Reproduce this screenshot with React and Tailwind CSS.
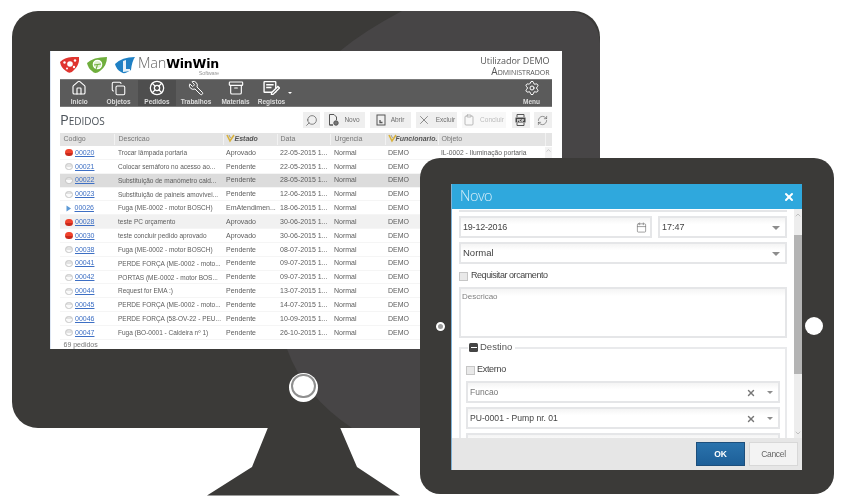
import React from "react";
import { House, Copy, LifeBuoy, Wrench, Archive, Settings, Search, X, Clipboard, RefreshCw, Calendar, ChevronUp, ChevronDown } from "lucide-react";

const rows = [
  ["r", "00020", "Trocar lâmpada portaria", "Aprovado", "22-05-2015 1...", "IL-0002 - Iluminação portaria", ""],
  ["g", "00021", "Colocar semáforo no acesso ao...", "Pendente", "22-05-2015 1...", "", ""],
  ["g", "00022", "Substituição de manómetro cald...", "Pendente", "28-05-2015 1...", "", "bg-[#dcdcdc]"],
  ["g", "00023", "Substituição de paineis amovívei...", "Pendente", "12-06-2015 1...", "", ""],
  ["b", "00026", "Fuga (ME-0002 - motor BOSCH)", "EmAtendimen...", "18-06-2015 1...", "", ""],
  ["r", "00028", "teste PC orçamento", "Aprovado", "30-06-2015 1...", "", "bg-[#f1f1f1]"],
  ["r", "00030", "teste concluir pedido aprovado", "Aprovado", "30-06-2015 1...", "", ""],
  ["g", "00038", "Fuga (ME-0002 - motor BOSCH)", "Pendente", "08-07-2015 1...", "", ""],
  ["g", "00041", "PERDE FORÇA (ME-0002 - moto...", "Pendente", "09-07-2015 1...", "", ""],
  ["g", "00042", "PORTAS (ME-0002 - motor BOS...", "Pendente", "09-07-2015 1...", "", ""],
  ["g", "00044", "Request for EMA :)", "Pendente", "13-07-2015 1...", "", ""],
  ["g", "00045", "PERDE FORÇA (ME-0002 - moto...", "Pendente", "14-07-2015 1...", "", ""],
  ["g", "00046", "PERDE FORÇA (58-OV-22 - PEU...", "Pendente", "10-09-2015 1...", "", ""],
  ["g", "00047", "Fuga (BO-0001 - Caldeira nº 1)", "Pendente", "26-10-2015 1...", "", ""],
];

const cols = "grid grid-cols-[54px_109px_54px_53px_55px_53px_107px_7px]";

function Gold() {
  return (
    <svg width="9" height="9" viewBox="0 0 9 9" className="absolute left-[2px] top-0">
      <path d="M1 1 L4 7 L8 1" fill="none" stroke="#d9b23c" strokeWidth="1.6" />
      <path d="M3 1 L4.5 4" stroke="#8a8a8a" strokeWidth="0.8" />
    </svg>
  );
}

function Status({ kind }) {
  if (kind === "b")
    return (
      <svg width="7" height="7" viewBox="0 0 7 7" className="ml-[5.5px] mr-[2.5px] shrink-0">
        <path d="M1.5 0.5 L6 3.5 L1.5 6.5 Z" fill="#5d9ad6" />
      </svg>
    );
  if (kind === "r")
    return <span className="ml-[5px] mr-[2.5px] h-[7px] w-[8px] shrink-0 rounded-full bg-[linear-gradient(#f0432d_55%,#c92a1c_55%)]" />;
  return <span className="ml-[5px] mr-[2.5px] h-[7px] w-[8px] shrink-0 rounded-full border border-[#c6c6c6] bg-[linear-gradient(#e2e2e2_50%,#fafafa_50%)]" />;
}

function NavItem({ icon, label, w, active }) {
  return (
    <div className={`flex h-full flex-col items-center justify-end ${w} ${active ? "bg-[#4e4e4e]" : ""}`}>
      {icon}
      <span className="mt-[1px] text-[6.5px] font-bold leading-[9px] text-[#dedede]">{label}</span>
    </div>
  );
}

function ToolBtn({ w, icon, label, faint }) {
  return (
    <div className={`flex h-[16px] items-center justify-center gap-[5px] ${w} ${faint ? "bg-[#f8f8f8] text-[#bdbdbd]" : "bg-[#efefef] text-[#6e6e6e]"} text-[6.5px]`}>
      {icon}
      {label && <span>{label}</span>}
    </div>
  );
}

function Logos() {
  return (
    <div className="flex items-center gap-[8px]">
      <svg width="19" height="17" viewBox="0 0 19 17">
        <path d="M0 5 Q6 -1 19 0 Q20 7 14 13 Q10 18 6 14 Q1 11 0 5Z" fill="#e0352f" />
        <circle cx="10" cy="7" r="2.8" fill="#fff" />
        <circle cx="4.5" cy="5.5" r="1.2" fill="#fff" /><circle cx="15" cy="3.5" r="1.2" fill="#fff" /><circle cx="14" cy="10" r="1.2" fill="#fff" /><circle cx="7" cy="11.5" r="1" fill="#fff" />
      </svg>
      <svg width="20" height="17" viewBox="0 0 20 17">
        <path d="M0 6 Q6 0 20 0 Q20 9 13 14 Q8 18 5 14 Q1 11 0 6Z" fill="#6fae3c" />
        <circle cx="10.5" cy="7.5" r="4.2" fill="#dff0d0" stroke="#fff" strokeWidth="1.2" />
        <path d="M7 8 L14 7 M10.5 8 L9 12" stroke="#6fae3c" strokeWidth="1.1" />
      </svg>
      <svg width="20" height="17" viewBox="0 0 20 17">
        <path d="M0 7 Q7 0 20 0 Q17 4 16 13 Q9 18 6 15 Q1 12 0 7Z" fill="#1f80c4" />
        <path d="M8 4 L11 3 L11 12 L15 12 L15 14 L8 15Z" fill="#e5f1f9" />
      </svg>
    </div>
  );
}

function Field({ children, cls = "" }) {
  return (
    <div className={`flex h-[22px] items-center border-2 border-[#e5e6e8] bg-[linear-gradient(#f4f4f4,#fff_35%)] pl-[1px] pr-[5px] pt-[1px] text-[9px] text-[#444] ${cls}`}>
      {children}
    </div>
  );
}

const Caret = () => <span className="ml-auto h-0 w-0 border-x-[4px] border-t-[4px] border-x-transparent border-t-[#8d8d8d]" />;
const SmallCaret = () => <span className="h-0 w-0 border-x-[3.5px] border-t-[3.5px] border-x-transparent border-t-[#8d8d8d]" />;
const Clear = () => <X size={10} strokeWidth={3.4} className="ml-auto mr-[11.5px] text-[#777]" />;

export default function App() {
  return (
    <div className="relative h-[499px] w-[842px] overflow-hidden bg-white font-['Liberation_Sans',sans-serif]">
      {/* stand */}
      <svg width="842" height="499" className="absolute left-0 top-0">
        <path d="M269 425 L252 467 L207 495.5 L400 495.5 L357 467 L339 425 Z" fill="#3b3a38" />
      </svg>

      {/* monitor */}
      <div className="absolute left-[12px] top-[11px] h-[417px] w-[588px] overflow-hidden rounded-[26px] bg-[#3b3a38] pl-[37.5px] pt-[40px]">
        <svg width="588" height="417" className="absolute left-0 top-0">
          <path d="M390 0 Q352 20 328 40 L275 338 Q292 385 340 417 L588 417 L588 32 Q586 4 558 0 Z" fill="#474546" />
        </svg>
        <div className="relative flex h-[298px] w-[512px] flex-col border-l border-[#dfe8f5] bg-white blur-[0.25px]">
          {/* header */}
          <div className="flex h-[28px] shrink-0 items-center pl-[9.5px] pr-[12px]">
            <Logos />
            <div className="relative ml-[3px] -mt-[3px] text-[14.5px] leading-[16px] tracking-[-0.2px] text-black">
              <span className="font-['Open_Sans'] font-light text-[#666]">Man</span>
              <span className="font-['DejaVu_Sans'] text-[12.5px] font-bold">WinWin</span>
              <span className="absolute right-0 top-[16px] text-[5.5px] leading-[5px] text-[#999]">Software</span>
            </div>
            <div className="ml-auto flex flex-col items-end pt-[1px] text-[#555]">
              <span className="font-['Open_Sans'] text-[9px] leading-[10px]">Utilizador DEMO</span>
              <span className="font-['Open_Sans'] text-[10px] leading-[10px] [font-variant:small-caps]">Administrador</span>
            </div>
          </div>

          {/* nav */}
          <div className="ml-[9px] mr-[10px] flex h-[28px] shrink-0 items-stretch border-y border-[#7b7b7b] bg-[#5b5b5b] text-white">
            <NavItem w="w-[39.5px]" label="Inicio" icon={<House size={16} strokeWidth={1.7} />} />
            <NavItem w="w-[39px]" label="Objetos" icon={<Copy size={15} strokeWidth={1.7} />} />
            <NavItem w="w-[38px]" active label="Pedidos" icon={<LifeBuoy size={16} strokeWidth={1.9} />} />
            <NavItem w="w-[40px]" label="Trabalhos" icon={<Wrench size={16} strokeWidth={1.5} className="-scale-x-100" />} />
            <NavItem w="w-[39px]" label="Materiais" icon={<Archive size={16} strokeWidth={1.7} />} />
            <NavItem
              w="w-[33px]"
              label="Registos"
              icon={
                <svg width="17" height="16" viewBox="0 0 16 15" fill="none" stroke="currentColor" strokeWidth="1.3">
                  <rect x="1" y="1.5" width="11" height="10" rx="0.5" />
                  <path d="M3 4.5 H10 M3 7 H8" />
                  <path d="M8 12 L14 6 L15.5 7.5 L9.5 13.5 H8Z" fill="#5b5b5b" />
                </svg>
              }
            />
            <span className="mt-[12px] h-0 w-0 border-x-[2px] border-t-[2px] border-x-transparent border-t-white" />
            <div className="ml-auto flex h-full w-[40px] flex-col items-center justify-end">
              <Settings size={16} strokeWidth={1.5} />
              <span className="mt-[1px] text-[6.5px] font-bold leading-[9px] text-[#dedede]">Menu</span>
            </div>
          </div>

          {/* title + toolbar */}
          <div className="ml-[9px] mr-[10px] flex h-[26px] shrink-0 items-center">
            <span className="pl-[0.5px] font-['Open_Sans'] text-[14.5px] leading-none text-[#4b5259] [font-variant:small-caps]">Pedidos</span>
            <div className="ml-auto flex items-center gap-[5px]">
              <ToolBtn w="w-[17px]" icon={<Search size={13} strokeWidth={1.3} className="-scale-x-100 text-[#555]" />} />
              <ToolBtn
                w="w-[41px] -ml-[1px]"
                label="Novo"
                icon={
                  <svg width="11" height="12" viewBox="0 0 11 12" fill="none" stroke="#555" strokeWidth="1">
                    <path d="M1.5 .5 H6 L8.5 3 V6 M5 11 H1.5 Z M1.5 .5 V11" />
                    <circle cx="8" cy="9" r="2.2" fill="#777" />
                  </svg>
                }
              />
              <ToolBtn
                w="w-[41px]"
                label="Abrir"
                icon={
                  <svg width="10" height="12" viewBox="0 0 10 12" fill="none" stroke="#555" strokeWidth="1">
                    <rect x="1" y="1" width="8" height="10" />
                    <path d="M4 6 V8.5 H6.5" strokeWidth="1.3" />
                  </svg>
                }
              />
              <ToolBtn w="w-[41px]" label="Excluir" icon={<X size={14} strokeWidth={1.1} className="text-[#555]" />} />
              <ToolBtn w="w-[44px]" faint label="Concluir" icon={<Clipboard size={12} strokeWidth={1.6} className="text-[#a9a9a9]" />} />
              <ToolBtn
                w="w-[18px] ml-[1px]"
                icon={
                  <svg width="11" height="12" viewBox="0 0 11 12" fill="none" stroke="#555" strokeWidth="1">
                    <path d="M2 .5 H9 V3 M2 .5 V3 M2 9 V11.5 H9 V9" />
                    <rect x=".5" y="3.5" width="10" height="5" fill="#444" stroke="none" />
                    <text x="5.5" y="7.6" textAnchor="middle" fontSize="3.6" fontWeight="700" fill="#fff" stroke="none">PDF</text>
                  </svg>
                }
              />
              <ToolBtn w="w-[18px] -ml-[1px]" icon={<RefreshCw size={11} strokeWidth={1.3} className="text-[#555]" />} />
            </div>
          </div>

          {/* table */}
          <div className="ml-[9px] mr-[10px] text-[7px] text-[#5c5c5c]">
            <div className={`${cols} h-[13px] items-center bg-[#e4e4e4] text-[#777]`}>
              <span className="pl-[4px]">Codigo</span>
              <span className="border-l border-[#f2f2f2] pl-[4px]">Descricao</span>
              <span className="relative border-l border-[#f2f2f2] pl-[11px] font-bold italic text-[#555]"><Gold />Estado</span>
              <span className="border-l border-[#f2f2f2] pl-[3px]">Data</span>
              <span className="border-l border-[#f2f2f2] pl-[4px]">Urgencia</span>
              <span className="relative whitespace-nowrap border-l border-[#f2f2f2] pl-[10px] font-bold italic text-[#555]"><Gold />Funcionario.</span>
              <span className="border-l border-[#f2f2f2] pl-[3px]">Objeto</span>
              <span className="h-full border-l border-[#f2f2f2]" />
            </div>
            {rows.map((r) => (
              <div key={r[1]} className={`${cols} h-[13.85px] items-center border-b border-[#f5f5f5] pt-[1px] ${r[6]}`}>
                <span className="flex items-center">
                  <Status kind={r[0]} />
                  <span className="text-[#3d6fc4] underline">{r[1]}</span>
                </span>
                <span className="whitespace-nowrap pl-[4.5px] text-[6.5px]">{r[2]}</span>
                <span className="whitespace-nowrap pl-[3.5px]">{r[3]}</span>
                <span className="whitespace-nowrap pl-[3.5px]">{r[4]}</span>
                <span className="pl-[4.5px]">Normal</span>
                <span className="pl-[3.5px]">DEMO</span>
                <span className="whitespace-nowrap pl-[3.5px] text-[6.7px]">{r[5]}</span>
                <span className="flex h-full items-start justify-center bg-[#f3f3f3]">
                  {r[1] === "00020" && <ChevronUp size={7} className="text-[#aaa]" />}
                </span>
              </div>
            ))}
            <div className="pl-[4px] leading-[9px] text-[#777]">69 pedidos</div>
          </div>
        </div>

        {/* monitor button */}
        <div className="absolute left-[277px] top-[362px] flex h-[29px] w-[29px] items-start justify-center rounded-full bg-white pt-[1px]">
          <div className="h-[24px] w-[25px] rounded-full border-2 border-[#8f8f8f] bg-white" />
        </div>
      </div>

      {/* tablet */}
      <div className="absolute left-[420px] top-[158px] h-[336px] w-[414px] rounded-[20px] bg-[#3b3a38] pl-[31px] pt-[26px]">
        <div className="absolute left-[16px] top-[164px] h-[9px] w-[9px] rounded-full border-2 border-white bg-[#9b9b9b]" />
        <div className="absolute left-[385px] top-[159px] h-[18px] w-[18px] rounded-full bg-white" />

        <div className="flex h-[286px] w-[351px] flex-col overflow-hidden border-l border-[#7fb3d8] bg-white blur-[0.2px]">
          <div className="flex h-[25px] shrink-0 items-center justify-between bg-[#2fa8dd] pl-[8px] pr-[7px]">
            <span className="font-['Open_Sans'] text-[14.5px] font-light leading-none tracking-[-0.5px] text-[#d3edf9]">Novo</span>
            <X size={12} strokeWidth={4} className="text-white" />
          </div>

          <div className="flex min-h-0 flex-1">
            <div className="relative min-w-0 flex-1 overflow-hidden pl-[7px] pr-[7px]">
              <div className="h-[3px] border-b-2 border-[#e5e6e8]" />
              <div className="mt-[4px] flex gap-[6px]">
                <Field cls="w-[193px]">
                  <span className="pl-[1px] tracking-[-0.2px]">19-12-2016</span>
                  <Calendar size={11} strokeWidth={1.5} className="ml-auto -mr-[1.5px] text-[#777]" />
                </Field>
                <Field cls="w-[129px]">
                  <span className="pl-[1px]">17:47</span>
                  <Caret />
                </Field>
              </div>
              <Field cls="mt-[4px]">
                <span className="pl-[1px] text-[9.5px]">Normal</span>
                <Caret />
              </Field>
              <label className="mt-[7px] flex h-[10px] items-center gap-[3px] text-[9px] tracking-[-0.45px] text-[#444]">
                <span className="h-[9px] w-[9px] border border-[#c6c6c6] bg-[#e9e9e9]" />
                Requisitar orcamento
              </label>
              <div className="mt-[6px] h-[51px] border-2 border-[#e5e6e8] bg-[linear-gradient(#f4f4f4,#fff_15%)] pl-[1px] text-[8px] leading-[16px] text-[#808080]">Descricao</div>

              <fieldset className="relative mt-[9px] h-[120px] border-2 border-[#e9eaec] px-[5px]">
                <div className="absolute -top-[6px] left-[7px] flex h-[9px] items-center gap-[1px] bg-white px-[1px] pr-[3px] text-[9.5px] text-[#555]">
                  <span className="flex h-[9px] w-[9px] items-center justify-center rounded-[1.5px] bg-[#444]">
                    <span className="h-[1.5px] w-[6px] bg-white" />
                  </span>
                  <span className="ml-[1px]">Destino</span>
                </div>
                <label className="mt-[16px] flex h-[10px] items-center gap-[2px] text-[9px] tracking-[-0.3px] text-[#444]">
                  <span className="h-[9px] w-[9px] border border-[#c6c6c6] bg-[#e9e9e9]" />
                  Externo
                </label>
                <Field cls="mt-[6px]">
                  <span className="pl-[1px] text-[8.5px] text-[#777]">Funcao</span>
                  <Clear />
                  <SmallCaret />
                </Field>
                <Field cls="mt-[4px]">
                  <span className="pl-[1px] text-[8.6px]">PU-0001 - Pump nr. 01</span>
                  <Clear />
                  <SmallCaret />
                </Field>
                <Field cls="mt-[4px]">
                  <span />
                </Field>
              </fieldset>
            </div>
            <div className="flex w-[8px] shrink-0 flex-col bg-[#ededed]">
              <ChevronUp size={8} className="mt-[2px] text-[#aaa]" />
              <div className="mt-[16px] h-[139px] bg-[#b4b4b4]" />
              <ChevronDown size={8} className="mb-[1px] mt-auto text-[#aaa]" />
            </div>
          </div>

          <div className="flex h-[32px] shrink-0 items-center justify-end gap-[4px] bg-[#e6e6e6] pr-[4px]">
            <div className="flex h-[24px] w-[49px] items-center justify-center border border-[#1d4f7c] bg-[linear-gradient(#2a73ad,#1d5f98)] text-[8.5px] font-bold text-white">OK</div>
            <div className="flex h-[24px] w-[49px] items-center justify-center border border-[#d8d8d8] bg-[#f3f3f3] text-[8.5px] tracking-[-0.3px] text-[#666]">Cancel</div>
          </div>
        </div>
      </div>
    </div>
  );
}
